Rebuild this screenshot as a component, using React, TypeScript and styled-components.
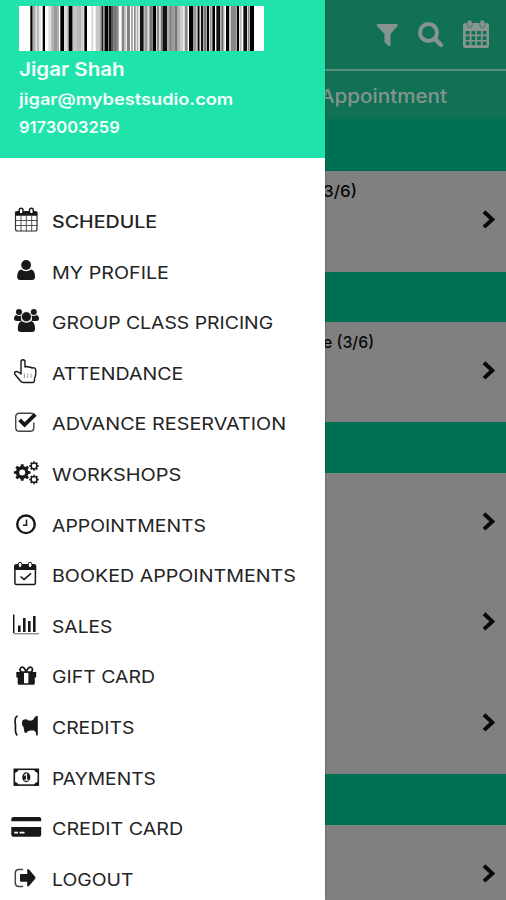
import React, { useLayoutEffect, useRef } from "react";
import styled, { createGlobalStyle } from "styled-components";

const Global = createGlobalStyle`
  * { box-sizing: border-box; }
  body { margin: 0; background: #808080; }
`;

const Screen = styled.div`
  position: relative;
  width: 506px;
  height: 900px;
  overflow: hidden;
  background: #808080;
  font-family: Inter, "Liberation Sans", sans-serif;
`;

const Page = styled.main`
  display: flex;
  flex-direction: column;
  height: 100%;
`;

const Toolbar = styled.header`
  height: 71px;
  flex: none;
  display: flex;
  justify-content: flex-end;
  background: #107155;
  border-bottom: 2px solid #5a8f7e;
`;

const TabBar = styled.nav`
  height: 48px;
  flex: none;
  display: flex;
  align-items: center;
  padding: 3px 0 0 320px;
  background: #107155;
  color: #87948f;
`;

const DayBand = styled.div<{ $h: number }>`
  height: ${(p) => p.$h}px;
  flex: none;
  background: #007055;
`;

const ClassRow = styled.section<{ $h: number; $divided?: boolean }>`
  height: ${(p) => p.$h}px;
  flex: none;
  display: flex;
  justify-content: space-between;
  padding: 11px 9px 0 323px;
  color: #080808;
  border-bottom: ${(p) => (p.$divided ? "1px solid #7a7b7b" : "0")};
`;

const Chevron = styled.svg`
  width: 16px;
  height: 22px;
  flex: none;
  margin: 26px 0 0 auto;
`;

const Drawer = styled.aside`
  position: absolute;
  inset: 0 auto 0 0;
  width: 325px;
  background: #fff;
  box-shadow: 0 0 2px rgba(0, 0, 0, 0.35);
  overflow: hidden;
`;

const Profile = styled.div`
  height: 158px;
  padding: 6px 19px 0;
  color: #f2fffa;
  background: #20e3ac;
`;

const Barcode = styled.svg`
  display: block;
  width: 245px;
  height: 45px;
`;

const ProfileLine = styled.div<{ $h: number }>`
  height: ${(p) => p.$h}px;
  display: flex;
  align-items: center;
`;

const Menu = styled.ul`
  list-style: none;
  margin: 0;
  padding: 38px 0 0;
`;

const MenuItem = styled.li`
  height: 50.6px;
  display: flex;
  align-items: center;
  padding-left: 12px;
  gap: 11.5px;
  color: #242424;
`;

const MenuLabel = styled.div`
  display: flex;
  padding-top: 2px;
`;

const MenuIcon = styled.svg`
  width: 28px;
  height: 28px;
  flex: none;
  overflow: visible;
  color: #181818;
`;

const Line = styled.span<{ $size: number; $weight: number }>`
  display: inline-block;
  font-size: ${(p) => p.$size}px;
  font-weight: ${(p) => p.$weight};
  line-height: 1.2;
  white-space: nowrap;
  transform-origin: left center;
`;

/* A single line of text stretched horizontally to a fixed measure. */
function FitLine({ text, width, size, weight }: { text: string; width: number; size: number; weight: number }) {
  const ref = useRef<HTMLSpanElement>(null);
  useLayoutEffect(() => {
    const el = ref.current;
    if (el) el.style.transform = `scaleX(${width / el.offsetWidth})`;
  }, [text, width]);
  return (
    <Line ref={ref} $size={size} $weight={weight}>
      {text}
    </Line>
  );
}

/* Bars as [start, end, shade], in thirds of a pixel. */
const bars: [number, number, string][] = [
  [34, 41, "#000"], [41, 50, "#aaa"], [50, 54, "#ddd"], [54, 61, "#bbb"], [61, 66, "#e8e8e8"], [71, 78, "#000"],
  [88, 97, "#ddd"], [97, 104, "#aaa"], [104, 114, "#999"], [114, 120, "#b0b0b0"], [124, 135, "#000"],
  [135, 143, "#ddd"], [143, 149, "#bbb"], [149, 161, "#000"], [161, 174, "#c4c4c4"], [174, 188, "#b8b8b8"],
  [188, 194, "#ccc"], [196, 204, "#000"], [217, 223, "#d8d8d8"], [230, 244, "#c8c8c8"], [244, 248, "#777"],
  [248, 253, "#222"], [253, 257, "#888"], [257, 267, "#000"], [267, 270, "#888"], [270, 276, "#111"],
  [276, 284, "#555"], [284, 291, "#777"], [291, 299, "#888"], [308, 317, "#888"], [317, 322, "#ccc"],
  [324, 333, "#808080"], [336, 342, "#aaa"], [345, 350, "#888"], [353, 358, "#aaa"], [358, 362, "#ddd"],
  [363, 374, "#111"], [376, 386, "#999"], [386, 390, "#ddd"], [391, 400, "#777"], [401, 411, "#000"],
  [413, 420, "#888"], [420, 424, "#ddd"], [425, 431, "#777"], [431, 445, "#111"], [447, 451, "#aaa"],
  [451, 456, "#777"], [456, 467, "#999"], [467, 476, "#777"], [476, 483, "#b4b4b4"], [483, 493, "#ccc"],
  [497, 506, "#888"], [510, 522, "#000"], [522, 533, "#999"], [533, 536, "#ccc"], [536, 542, "#000"],
  [542, 545, "#ccc"], [546, 553, "#111"], [555, 561, "#777"], [563, 570, "#000"], [572, 578, "#999"],
  [580, 588, "#000"], [592, 604, "#111"], [607, 614, "#666"], [614, 618, "#ddd"], [621, 631, "#000"],
  [631, 636, "#ccc"], [636, 651, "#888"], [653, 660, "#000"], [662, 668, "#bbb"], [673, 684, "#111"],
  [686, 692, "#888"], [693, 705, "#000"],
];

const gear = (cx: number, cy: number, r: number, teeth: number, hole: number) => {
  const step = (Math.PI * 2) / teeth;
  const pts: string[] = [];
  for (let i = 0; i < teeth; i++) {
    [[-0.32, 0.76], [-0.2, 1], [0.2, 1], [0.32, 0.76]].forEach(([o, k]) => {
      const a = (i + o) * step;
      pts.push(`${(cx + Math.cos(a) * r * k).toFixed(2)} ${(cy + Math.sin(a) * r * k).toFixed(2)}`);
    });
  }
  const h = r * hole;
  return `M${pts.join("L")}Z M${cx - h} ${cy}a${h} ${h} 0 1 0 ${2 * h} 0a${h} ${h} 0 1 0 ${-2 * h} 0Z`;
};

const fill = "currentColor";
const stroke = { fill: "none", stroke: "currentColor", strokeLinecap: "round" as const, strokeLinejoin: "round" as const };

const icons = {
  calendar: (
    <>
      <path {...stroke} stroke="#555" strokeWidth="1" d="M9 9v15M14.300 9v15M19.700 9v15M3.500 13.500h21.500M3.500 18.500h21.500" />
      <path {...stroke} stroke="#333" strokeWidth="1.200" d="M3.500 5v17q0 2 2 2h17.500q2 0 2-2V5" />
      <path fill={fill} d="M3.200 8.800V6q0-2 2-2h18q2 0 2 2v2.800z" />
      <rect x="7.200" y="1.300" width="3.800" height="5.500" rx="1.900" fill="#fff" stroke="currentColor" strokeWidth="1.400" />
      <rect x="17.500" y="1.300" width="3.800" height="5.500" rx="1.900" fill="#fff" stroke="currentColor" strokeWidth="1.400" />
    </>
  ),
  user: (
    <>
      <circle cx="14.100" cy="7" r="4.900" fill={fill} />
      <path fill={fill} d="M9.200 11.500q4.900 3.500 9.800 0Q23 12 23 19q0 3-3 3H8.200q-3 0-3-3 0-7 4-7.500z" />
    </>
  ),
  group: (
    <>
      <circle cx="7" cy="4" r="3" fill={fill} />
      <circle cx="21.800" cy="4" r="3" fill={fill} />
      <path fill={fill} d="M4.500 7q2 1.500 5 .500-1.500 3 0 5.500H5q-3 0-3-2.500Q2 7.500 4.500 7zM24.500 7q-2 1.500-5 .500 1.500 3 0 5.500H24q3 0 3-2.500 0-3-2.500-3.500z" />
      <circle cx="14.400" cy="8.700" r="5" fill={fill} stroke="#fff" strokeWidth=".7" />
      <path fill={fill} d="M9.600 13q4.800 3.500 9.600 0 3.800 1 3.800 8 0 3-3 3H8.800q-3 0-3-3 0-7 3.800-8z" />
    </>
  ),
  hand: (
    <>
      <path {...stroke} strokeWidth="1.400" d="M9 15V3Q9 .800 11 .800T13 3V8q2-1 3.500.300 2-.8 3.200.700Q23.800 8 23.800 11.500v3q0 2.500-1.300 5v2.300q0 1.700-1.700 1.700H11.500Q9.500 23.500 8.500 22L3 15.500Q2 13 4 12.500T9 15" />
      <path {...stroke} stroke="#777" strokeWidth=".7" d="M12.500 15v3.500M15.700 15v3.500M19 15v3.500" />
    </>
  ),
  check: (
    <>
      <path {...stroke} stroke="#444" strokeWidth="1.400" d="M21 3.700Q20.500 3.200 19 3.200H7.500q-3.800 0-3.800 3.800v10.500q0 3.800 3.800 3.800H18q3.800 0 3.800-3.800V13" />
      <path fill="none" stroke="currentColor" strokeWidth="3.800" d="M7.600 9.800l5 5.100L23.300 4.300" />
    </>
  ),
  cogs: (
    <>
      <path fill={fill} fillRule="evenodd" d={gear(10.200, 12.500, 8.400, 8, 0.36)} />
      <path fill={fill} fillRule="evenodd" d={gear(22, 6, 4.800, 8, 0.45)} />
      <path fill={fill} fillRule="evenodd" d={gear(22, 19.500, 4.800, 8, 0.45)} />
    </>
  ),
  clock: (
    <>
      <circle cx="14" cy="13.300" r="8.800" fill="none" stroke="currentColor" strokeWidth="2.400" />
      <path fill="none" stroke="currentColor" strokeWidth="1.500" d="M14.500 8.500v5.700H11" />
    </>
  ),
  booked: (
    <>
      <path {...stroke} strokeWidth="1.500" d="M2.900 5v17q0 1.500 1.500 1.500h17.500q1.500 0 1.500-1.500V5" />
      <path fill={fill} d="M2.200 9V5q0-2 2-2h18q2 0 2 2v4z" />
      <rect x="6.300" y="1.300" width="3.600" height="5.200" rx="1.800" fill="#fff" stroke="currentColor" />
      <rect x="16.300" y="1.300" width="3.600" height="5.200" rx="1.800" fill="#fff" stroke="currentColor" />
      <path fill="none" stroke="currentColor" strokeWidth="1.500" d="M8.500 15.500l3.600 2.900 7-6" />
    </>
  ),
  chart: (
    <>
      <path fill={fill} d="M1 2.500h1.500V21H1zM6 13.500h2.600v6.500H6zM11 6h2.600v14H11zM16 9h2.600v11H16zM21 4h2.600v16H21z" />
      <path fill="none" stroke="#888" strokeWidth="1.300" d="M1.500 21.700H27" />
    </>
  ),
  gift: (
    <>
      <path fill={fill} fillRule="evenodd" d="M4.300 9h19.900v5.500h-1.400v5.700q0 1.500-1.500 1.500H7.200q-1.500 0-1.500-1.500v-5.700H4.300zM12 9.800V20.300h4.400V9.800z" />
      <path {...stroke} strokeWidth="1.700" d="M13.500 9H10Q7.700 8.500 8 6.200 8.500 4 10.500 4.200 12 4.500 14.200 8.500 16.500 4.500 18 4.200q2-.2 2.500 2Q20.700 8.500 18.500 9H14" />
    </>
  ),
  credits: (
    <>
      <path {...stroke} strokeWidth="1.700" d="M5 3.200Q2.200 4.500 3.500 12.500 3 20 4.800 21.800" />
      <path fill={fill} d="M10.500 7.500q3-2.500 6 0h3.500q2-.5 2.800-3.700l3-1v19.700h-1.500q-.2-4-2.300-5h-4l-2.500 1-1 1.500-2-.5-1-5.500q-2.500-3-1-6.500z" />
    </>
  ),
  payments: (
    <>
      <rect x="2.300" y="5.300" width="24" height="15.800" fill="none" stroke="currentColor" strokeWidth="1.600" />
      <path fill={fill} d="M2 5h4.500q0 3-4.500 4zM26.600 5h-4.500q0 3 4.500 4zM2 21.400h4.500q0-3-4.500-4zM26.600 21.400h-4.500q0-3 4.500-4z" />
      <ellipse cx="14.300" cy="13.200" rx="4" ry="5" fill={fill} />
      <path fill="none" stroke="#fff" strokeWidth="1.200" d="M12.300 11.500l2.200-1.500v6M12.500 16.200h4" />
    </>
  ),
  card: (
    <>
      <path fill={fill} d="M-.7 7.200V5Q-.7 3 1.300 3h25.900q2 0 2 2v2.200zM-.7 13h29.900v7.700q0 2-2 2H1.300q-2 0-2-2z" />
      <path stroke="#fff" strokeWidth="1.700" d="M2.300 18.600h3.600M7.500 18.600h5" />
    </>
  ),
  logout: (
    <>
      <path {...stroke} stroke="#444" strokeWidth="1.500" d="M10.500 4.500H7q-3.700 0-3.700 3.700v9.500q0 3.700 3.700 3.700h3.500" />
      <path fill={fill} d="M9 9h6.200V4.700q.5-1.200 1.800-.2l6.200 7.300q.6 1 0 2L17 21q-1.300 1-1.800-.2v-4.100H9q-1 0-1-1V10q0-1 1-1z" />
    </>
  ),
};

const menu: { label: string; icon: keyof typeof icons; width: number; weight?: number }[] = [
  { label: "SCHEDULE", icon: "calendar", width: 105, weight: 500 },
  { label: "MY PROFILE", icon: "user", width: 117 },
  { label: "GROUP CLASS PRICING", icon: "group", width: 221 },
  { label: "ATTENDANCE", icon: "hand", width: 131 },
  { label: "ADVANCE RESERVATION", icon: "check", width: 234 },
  { label: "WORKSHOPS", icon: "cogs", width: 129 },
  { label: "APPOINTMENTS", icon: "clock", width: 154 },
  { label: "BOOKED APPOINTMENTS", icon: "booked", width: 244 },
  { label: "SALES", icon: "chart", width: 60 },
  { label: "GIFT CARD", icon: "gift", width: 103 },
  { label: "CREDITS", icon: "credits", width: 82 },
  { label: "PAYMENTS", icon: "payments", width: 104 },
  { label: "CREDIT CARD", icon: "card", width: 131 },
  { label: "LOGOUT", icon: "logout", width: 81 },
];

const ToolbarIcons = styled.svg`
  width: 130px;
  height: 69px;
  color: #87948f;
`;

function Arrow() {
  return (
    <Chevron viewBox="0 0 16 22">
      <path d="M3 3.700l8.300 7.700L3 19.100" fill="none" stroke="#080808" strokeWidth="4" />
    </Chevron>
  );
}

export default function App() {
  return (
    <Screen>
      <Global />
      <Page>
        <Toolbar>
          <ToolbarIcons viewBox="376 0 130 69">
            <path fill={fill} d="M377.500 24h19.500q1.500.500.500 2l-7 8v11q-.5 1.700-2 .7l-4-3.500V34l-7.500-8q-1-1.500.5-2z" />
            <circle cx="428.500" cy="32.500" r="8.500" fill="none" stroke="currentColor" strokeWidth="4" />
            <path {...stroke} strokeWidth="4.500" d="M435 39l6 6" />
            <rect x="463" y="23" width="26" height="25" rx="2.500" fill={fill} />
            <path fill="#107155" d="M465.700 31h3.900v3.600h-3.900zM471.500 31h3.800v3.600h-3.800zM477.100 31h3.800v3.600h-3.800zM482.700 31h3.800v3.600h-3.800zM465.700 36.300h3.900v3.600h-3.900zM471.500 36.300h3.800v3.600h-3.800zM477.100 36.300h3.800v3.600h-3.800zM482.700 36.300h3.800v3.600h-3.800zM465.700 41.600h3.900v3.600h-3.900zM471.500 41.600h3.800v3.600h-3.800zM477.100 41.600h3.800v3.600h-3.800zM482.700 41.600h3.800v3.600h-3.800z" />
            <rect x="467.200" y="20" width="5" height="7.500" rx="2.500" fill={fill} stroke="#107155" strokeWidth=".6" />
            <rect x="479.800" y="20" width="5" height="7.500" rx="2.500" fill={fill} stroke="#107155" strokeWidth=".6" />
          </ToolbarIcons>
        </Toolbar>
        <TabBar>
          <FitLine text="Appointment" width={127} size={18.5} weight={500} />
        </TabBar>
        <DayBand $h={52} />
        <ClassRow $h={101}>
          <FitLine text="3/6)" width={34} size={16.5} weight={500} />
          <Arrow />
        </ClassRow>
        <DayBand $h={50} />
        <ClassRow $h={100}>
          <FitLine text="e (3/6)" width={51} size={16.5} weight={500} />
          <Arrow />
        </ClassRow>
        <DayBand $h={51} />
        <ClassRow $h={100} $divided>
          <Arrow />
        </ClassRow>
        <ClassRow $h={101} $divided>
          <Arrow />
        </ClassRow>
        <ClassRow $h={100}>
          <Arrow />
        </ClassRow>
        <DayBand $h={51} />
        <ClassRow $h={101}>
          <Arrow />
        </ClassRow>
      </Page>
      <Drawer>
        <Profile>
          <Barcode viewBox="0 0 735 45" preserveAspectRatio="none">
            <rect width="735" height="45" fill="#fff" />
            {bars.map(([from, to, shade]) => (
              <rect key={from} x={from} width={to - from} height="45" fill={shade} />
            ))}
          </Barcode>
          <ProfileLine $h={38}>
            <FitLine text="Jigar Shah" width={106} size={19} weight={600} />
          </ProfileLine>
          <ProfileLine $h={21}>
            <FitLine text="jigar@mybestsudio.com" width={214} size={16.5} weight={600} />
          </ProfileLine>
          <ProfileLine $h={35}>
            <FitLine text="9173003259" width={101} size={16.5} weight={600} />
          </ProfileLine>
        </Profile>
        <Menu>
          {menu.map((m) => (
            <MenuItem key={m.label}>
              <MenuIcon viewBox="0 0 28 28">{icons[m.icon]}</MenuIcon>
              <MenuLabel>
                <FitLine text={m.label} width={m.width} size={17} weight={m.weight ?? 400} />
              </MenuLabel>
            </MenuItem>
          ))}
        </Menu>
      </Drawer>
    </Screen>
  );
}
